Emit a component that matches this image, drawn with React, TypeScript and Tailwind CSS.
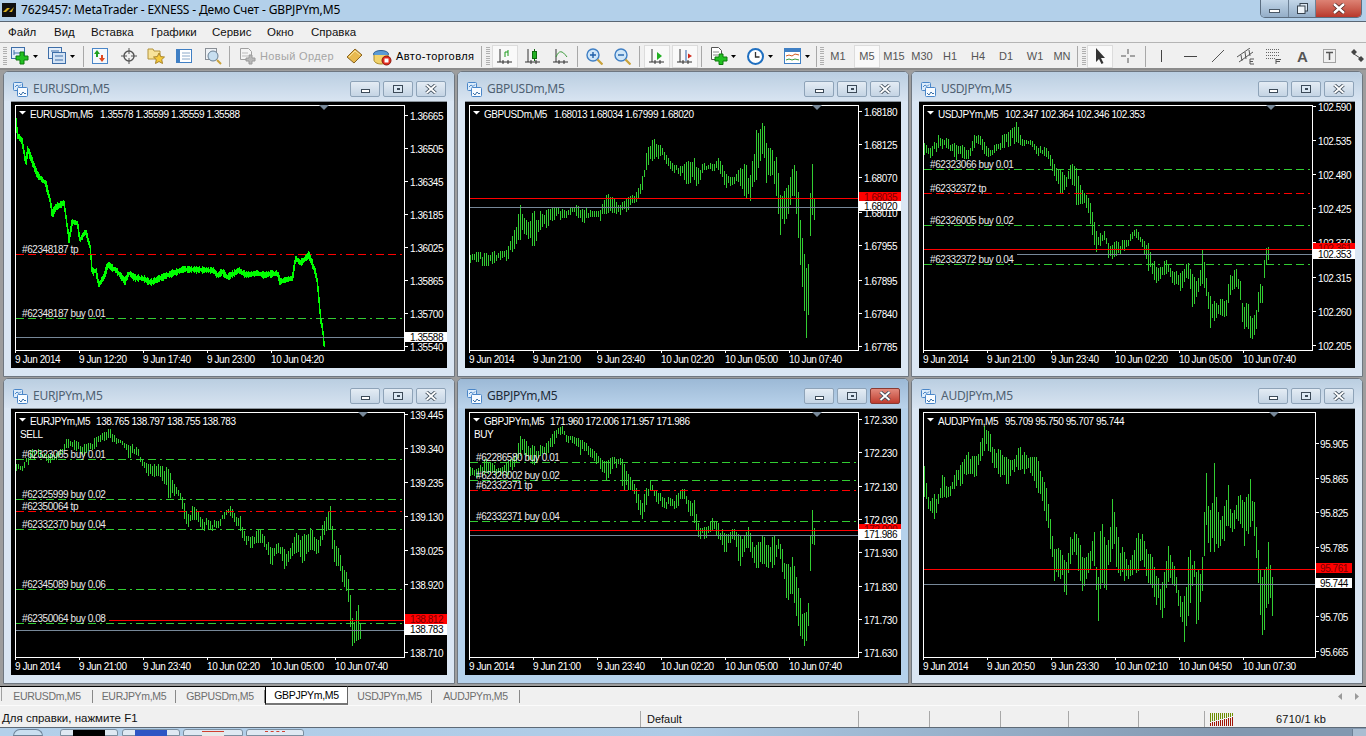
import React from "react";

type Key = [number, number, number];
type Order = { label: string; textY: number; lineY: number; color: string };
type ChartCfg = {
  symbol: string;
  values: string;
  valuesX: number;
  ox: number;
  oy: number;
  frameRight?: number;
  prices: [string, number][];
  ask: [string, number, number, number];
  bid: [string, number, number, number];
  askX?: number;
  bidX?: number;
  boxX?: number;
  boxW?: number;
  priceX?: number;
  orders: Order[];
  times: string[];
  shift: number;
  note?: [string, number, number];
  keys?: Key[];
  line?: [number, number][];
  active?: boolean;
};

const GREEN = "#32cd32";
const RED = "#ff0000";

const buy = (label: string, textY: number, lineY: number): Order => ({ label, textY, lineY, color: GREEN });
const tp = (label: string, textY: number, lineY: number): Order => ({ label, textY, lineY, color: RED });

const rnd = (i: number) => {
  const x = Math.sin(i * 12.9898) * 43758.5453;
  return x - Math.floor(x);
};

function barsPath(keys: Key[], ox: number, oy: number) {
  let d = "";
  const start = keys[0][0];
  const end = keys[keys.length - 1][0];
  let k = 0;
  for (let i = 0; start + i * 6 <= end; i++) {
    const zx = start + i * 6;
    while (k < keys.length - 2 && keys[k + 1][0] < zx) k++;
    const a = keys[k];
    const b = keys[k + 1];
    const t = (zx - a[0]) / (b[0] - a[0]);
    let top = a[1] + (b[1] - a[1]) * t;
    let bottom = a[2] + (b[2] - a[2]) * t;
    // bars away from a key point are shorter and wander a bit, like real candles
    if (Math.min(zx - a[0], b[0] - zx) >= 6) {
      const range = bottom - top;
      const off = (rnd(i + 7) - 0.5) * 14;
      top += rnd(i + 3) * range * 0.3 + off;
      bottom -= rnd(i + 91) * range * 0.3 - off;
    }
    const x = Math.round((start - ox) / 3) + i * 2 + 0.5;
    d += `M${x} ${Math.round((top - oy) / 3)}V${Math.round((Math.max(bottom, top + 9) - oy) / 3)}`;
  }
  return d;
}

function linePath(pts: [number, number][], ox: number, oy: number) {
  const at = (zx: number) => {
    let k = 0;
    while (k < pts.length - 2 && pts[k + 1][0] < zx) k++;
    const a = pts[k];
    const b = pts[k + 1];
    return a[1] + ((b[1] - a[1]) * (zx - a[0])) / (b[0] - a[0]);
  };
  let d = "";
  const start = pts[0][0];
  const end = pts[pts.length - 1][0];
  for (let i = 0; start + i * 3 <= end; i++) {
    const zx = start + i * 3;
    const y0 = at(zx);
    const y1 = at(Math.min(zx + 3, end));
    const j = 3 + rnd(i) * 7;
    const x = Math.round((start - ox) / 3) + i + 0.5;
    d += `M${x} ${Math.round((Math.min(y0, y1) - j - oy) / 3)}V${Math.round((Math.max(y0, y1) + j - oy) / 3) + 1}`;
  }
  return d;
}

const charts: ChartCfg[] = [
  {
    symbol: "EURUSDm,M5",
    values: "1.35578 1.35599 1.35559 1.35588",
    valuesX: 298,
    ox: 32,
    oy: 8,
    prices: [["1.36665", 47], ["1.36505", 146], ["1.36345", 245], ["1.36185", 344], ["1.36025", 443], ["1.35865", 541], ["1.35700", 640], ["1.35540", 739]],
    ask: ["", 0, 0, 0],
    bid: ["1.35588", 712, 697, 728],
    orders: [tp("#62348187 tp", 445, 463), buy("#62348187 buy 0.01", 638, 655)],
    times: ["9 Jun 2014", "9 Jun 12:20", "9 Jun 17:40", "9 Jun 23:00", "10 Jun 04:20"],
    shift: 313,
    line: [[46, 60], [50, 105], [65, 125], [75, 190], [82, 150], [95, 185], [110, 225], [135, 250], [148, 300], [155, 345], [165, 322], [190, 310], [195, 345], [205, 420], [215, 365], [230, 370], [238, 420], [255, 395], [268, 440], [275, 520], [285, 510], [295, 555], [310, 530], [322, 495], [350, 515], [373, 545], [385, 520], [405, 535], [425, 535], [450, 548], [490, 530], [550, 508], [640, 512], [650, 528], [665, 515], [680, 532], [715, 512], [735, 525], [770, 520], [790, 525], [830, 520], [838, 545], [875, 535], [885, 475], [900, 490], [925, 465], [935, 490], [948, 530], [955, 600], [960, 660], [965, 680], [970, 732]],
  },
  {
    symbol: "GBPUSDm,M5",
    values: "1.68013 1.68034 1.67999 1.68020",
    valuesX: 292,
    ox: 26,
    oy: 97,
    prices: [["1.68180", 125], ["1.68125", 224], ["1.68070", 323], ["1.68010", 428], ["1.67955", 527], ["1.67895", 632], ["1.67840", 731], ["1.67785", 830]],
    ask: ["1.68035", 385, 366, 395],
    bid: ["1.68020", 412, 395, 423],
    orders: [],
    times: ["9 Jun 2014", "9 Jun 21:00", "9 Jun 23:40", "10 Jun 02:20", "10 Jun 05:00", "10 Jun 07:40"],
    shift: 352,
    keys: [[40, 555, 580], [60, 545, 575], [85, 550, 590], [110, 545, 580], [130, 545, 570], [150, 540, 575], [170, 490, 540], [190, 405, 510], [205, 455, 490], [230, 425, 535], [250, 425, 480], [270, 420, 475], [290, 412, 450], [320, 420, 445], [340, 415, 435], [360, 405, 440], [380, 420, 460], [410, 425, 440], [430, 420, 455], [450, 370, 430], [470, 385, 430], [490, 405, 435], [510, 385, 425], [540, 365, 395], [556, 320, 360], [570, 240, 290], [590, 205, 270], [610, 225, 260], [630, 260, 285], [650, 285, 310], [670, 290, 318], [690, 275, 345], [712, 265, 330], [720, 300, 355], [740, 280, 300], [770, 285, 305], [785, 262, 300], [805, 310, 355], [830, 325, 345], [845, 300, 335], [865, 280, 385], [880, 315, 395], [898, 180, 330], [905, 190, 290], [920, 150, 240], [928, 220, 340], [945, 240, 310], [960, 265, 390], [970, 375, 495], [985, 360, 455], [995, 345, 430], [1010, 280, 360], [1020, 310, 450], [1030, 450, 585], [1040, 540, 695], [1048, 595, 805], [1055, 580, 725], [1062, 285, 410], [1068, 280, 450], [1072, 385, 450]],
  },
  {
    symbol: "USDJPYm,M5",
    values: "102.347 102.364 102.346 102.353",
    valuesX: 283,
    ox: 26,
    oy: 97,
    prices: [["102.590", 110], ["102.535", 212], ["102.480", 314], ["102.425", 416], ["102.370", 518], ["102.315", 623], ["102.260", 725], ["102.205", 827]],
    ask: ["102.361", 538, 519, 537],
    bid: ["102.353", 553, 537, 567],
    bidX: 320,
    orders: [buy("#62323066 buy 0.01", 281, 298), tp("#62332372 tp", 353, 370), buy("#62326005 buy 0.02", 449, 466), buy("#62332372 buy 0.04", 566, 583)],
    times: ["9 Jun 2014", "9 Jun 21:00", "9 Jun 23:40", "10 Jun 02:20", "10 Jun 05:00", "10 Jun 07:40"],
    shift: 352,
    keys: [[40, 220, 255], [60, 235, 265], [82, 195, 235], [110, 205, 235], [135, 225, 270], [155, 225, 265], [170, 245, 270], [190, 195, 235], [205, 195, 220], [218, 215, 250], [230, 235, 265], [255, 225, 245], [275, 195, 235], [295, 185, 230], [317, 157, 215], [335, 210, 230], [365, 215, 232], [380, 235, 260], [405, 232, 260], [420, 260, 295], [435, 295, 330], [450, 300, 375], [465, 325, 355], [480, 280, 325], [497, 295, 410], [510, 355, 400], [530, 380, 420], [540, 405, 475], [555, 485, 550], [580, 485, 510], [592, 520, 565], [615, 515, 560], [640, 510, 545], [660, 490, 510], [678, 478, 505], [695, 510, 535], [712, 520, 605], [735, 590, 640], [745, 595, 630], [765, 568, 610], [785, 605, 640], [810, 610, 665], [830, 575, 615], [845, 615, 720], [860, 640, 670], [875, 532, 640], [885, 620, 670], [898, 680, 775], [915, 700, 745], [930, 685, 735], [945, 700, 745], [955, 620, 680], [975, 595, 650], [988, 635, 690], [996, 720, 780], [1010, 690, 770], [1020, 750, 815], [1035, 730, 785], [1045, 640, 700], [1055, 650, 700], [1062, 538, 595], [1072, 532, 570]],
  },
  {
    symbol: "EURJPYm,M5",
    values: "138.765 138.797 138.755 138.783",
    valuesX: 286,
    ox: 32,
    oy: 100,
    prices: [["139.445", 116], ["139.340", 218], ["139.235", 320], ["139.130", 422], ["139.025", 524], ["138.920", 626], ["138.710", 830]],
    ask: ["138.812", 733, 714, 745],
    bid: ["138.783", 763, 746, 777],
    askX: 327,
    orders: [buy("#62323065 buy 0.01", 233, 250), buy("#62325999 buy 0.02", 353, 370), tp("#62350064 tp", 389, 406), buy("#62332370 buy 0.04", 443, 460), buy("#62345089 buy 0.06", 623, 640), buy("#62350064 buy 0.08", 725, 742)],
    times: ["9 Jun 2014", "9 Jun 21:00", "9 Jun 23:40", "10 Jun 02:20", "10 Jun 05:00", "10 Jun 07:40"],
    shift: 352,
    note: ["SELL", 58, 173],
    keys: [[46, 265, 285], [65, 270, 285], [90, 220, 250], [115, 220, 240], [145, 235, 265], [170, 230, 250], [197, 190, 215], [225, 195, 225], [250, 205, 240], [285, 185, 215], [310, 170, 195], [325, 157, 185], [345, 185, 205], [375, 205, 220], [383, 210, 250], [410, 213, 235], [420, 250, 265], [440, 265, 300], [460, 265, 305], [480, 270, 305], [503, 280, 370], [520, 325, 360], [540, 355, 375], [547, 370, 420], [560, 420, 458], [575, 390, 430], [590, 405, 435], [600, 430, 460], [625, 435, 465], [655, 435, 455], [670, 410, 430], [690, 390, 420], [705, 425, 450], [718, 420, 465], [725, 460, 490], [750, 485, 520], [775, 460, 500], [790, 480, 515], [812, 520, 575], [830, 500, 525], [850, 520, 580], [870, 515, 545], [885, 470, 530], [905, 480, 565], [930, 455, 520], [950, 500, 540], [965, 445, 490], [978, 420, 460], [988, 390, 460], [995, 460, 530], [1002, 505, 570], [1015, 520, 570], [1025, 575, 625], [1040, 595, 655], [1048, 658, 755], [1055, 740, 820], [1062, 740, 795], [1070, 670, 795], [1078, 745, 790]],
  },
  {
    symbol: "GBPJPYm,M5",
    values: "171.960 172.006 171.957 171.986",
    valuesX: 280,
    ox: 26,
    oy: 88,
    active: true,
    prices: [["172.330", 118], ["172.230", 217], ["172.130", 319], ["172.030", 418], ["171.930", 517], ["171.830", 619], ["171.730", 718], ["171.630", 817]],
    ask: ["172.000", 452, 432, 448],
    bid: ["171.986", 466, 448, 480],
    orders: [buy("#62286580 buy 0.01", 230, 247), buy("#62326002 buy 0.02", 284, 301), tp("#62332371 tp", 314, 331), buy("#62332371 buy 0.04", 407, 424)],
    times: ["9 Jun 2014", "9 Jun 21:00", "9 Jun 23:40", "10 Jun 02:20", "10 Jun 05:00", "10 Jun 07:40"],
    shift: 352,
    note: ["BUY", 52, 160],
    keys: [[40, 262, 290], [60, 270, 295], [85, 235, 280], [105, 250, 280], [130, 265, 290], [150, 245, 290], [170, 235, 265], [190, 168, 230], [205, 182, 225], [230, 200, 260], [250, 195, 230], [270, 190, 225], [290, 155, 195], [315, 138, 160], [330, 170, 190], [350, 170, 190], [370, 180, 225], [395, 200, 225], [415, 215, 248], [435, 240, 275], [450, 245, 305], [465, 232, 270], [490, 235, 255], [497, 240, 330], [515, 285, 330], [530, 310, 335], [540, 330, 380], [555, 375, 420], [565, 330, 385], [580, 305, 335], [600, 335, 370], [620, 355, 385], [640, 355, 380], [660, 345, 385], [680, 322, 350], [695, 365, 400], [712, 360, 430], [722, 430, 470], [745, 445, 480], [765, 415, 450], [780, 425, 470], [805, 465, 525], [830, 445, 470], [848, 470, 565], [865, 465, 505], [875, 438, 505], [890, 505, 545], [900, 495, 570], [920, 462, 550], [930, 505, 565], [950, 465, 565], [965, 480, 505], [975, 505, 570], [990, 560, 668], [1007, 530, 640], [1020, 605, 720], [1030, 655, 770], [1045, 710, 808], [1055, 665, 730], [1062, 392, 510], [1067, 390, 490], [1072, 445, 495]],
  },
  {
    symbol: "AUDJPYm,M5",
    values: "95.709 95.750 95.707 95.744",
    valuesX: 285,
    ox: 26,
    oy: 100,
    frameRight: 396,
    boxX: 397,
    boxW: 36,
    priceX: 401,
    prices: [["95.905", 203], ["95.865", 308], ["95.825", 410], ["95.785", 515], ["95.705", 722], ["95.665", 827]],
    ask: ["95.761", 580, 562, 593],
    bid: ["95.744", 625, 607, 638],
    orders: [],
    times: ["9 Jun 2014", "9 Jun 20:50", "9 Jun 23:30", "10 Jun 02:10", "10 Jun 04:50", "10 Jun 07:30"],
    shift: 355,
    keys: [[40, 270, 365], [52, 365, 400], [70, 355, 430], [82, 355, 385], [95, 292, 365], [115, 340, 365], [135, 285, 330], [150, 265, 330], [172, 230, 295], [195, 245, 305], [208, 200, 255], [220, 152, 225], [237, 170, 225], [245, 220, 268], [265, 220, 300], [290, 250, 330], [310, 250, 290], [325, 210, 280], [340, 230, 295], [365, 245, 300], [380, 245, 350], [390, 295, 358], [405, 330, 430], [418, 430, 520], [430, 520, 615], [445, 515, 600], [465, 565, 665], [478, 485, 565], [490, 470, 530], [505, 490, 600], [515, 550, 650], [530, 540, 595], [550, 470, 570], [562, 605, 735], [570, 418, 610], [585, 515, 650], [604, 370, 520], [620, 480, 590], [640, 530, 615], [660, 555, 600], [680, 470, 590], [695, 475, 550], [710, 535, 620], [722, 535, 630], [735, 600, 685], [755, 620, 728], [772, 510, 620], [790, 570, 630], [805, 660, 705], [820, 660, 800], [835, 515, 700], [850, 555, 605], [857, 595, 770], [875, 540, 640], [885, 277, 440], [895, 440, 530], [910, 262, 530], [925, 445, 515], [940, 390, 495], [952, 328, 450], [965, 420, 470], [985, 352, 430], [1000, 380, 510], [1018, 310, 455], [1030, 380, 480], [1040, 505, 590], [1050, 600, 750], [1056, 605, 790], [1072, 500, 685], [1084, 605, 720]],
  },
];

const chartText = "font-['Liberation_Sans',Arial,sans-serif] text-[10px] tracking-[-0.43px]";

function ChartSvg({ c }: { c: ChartCfg }) {
  const ly = (z: number) => Math.round((z - c.oy) / 3);
  const lx = (z: number) => Math.round((z - c.ox) / 3);
  const right = c.frameRight ?? 393;
  const boxX = c.boxX ?? 394;
  const boxW = c.boxW ?? 42;
  const priceX = c.priceX ?? 399;
  return (
    <svg width="436" height="266" viewBox="0 0 436 266" className="block bg-black">
      {c.keys && <path d={barsPath(c.keys, c.ox, c.oy)} stroke={GREEN} strokeWidth="1" shapeRendering="crispEdges" fill="none" />}
      {c.line && <path d={linePath(c.line, c.ox, c.oy)} stroke="#00ff00" strokeWidth="1" shapeRendering="crispEdges" fill="none" />}
      {c.orders.map((o) => (
        <line key={o.label + o.lineY} x1="5" x2={right} y1={ly(o.lineY) + 0.5} y2={ly(o.lineY) + 0.5} stroke={o.color} strokeDasharray="8 4 8 4 2 4" shapeRendering="crispEdges" />
      ))}
      {c.ask[0] && <line x1={c.askX ? lx(c.askX) : 5} x2={right} y1={ly(c.ask[1]) + 0.5} y2={ly(c.ask[1]) + 0.5} stroke={RED} shapeRendering="crispEdges" />}
      <line x1={c.bidX ? lx(c.bidX) : 5} x2={right} y1={ly(c.bid[1]) + 0.5} y2={ly(c.bid[1]) + 0.5} stroke="#778899" shapeRendering="crispEdges" />
      <rect x="4.5" y="3.5" width={right - 4} height="244.5" fill="none" stroke="#fff" shapeRendering="crispEdges" />
      <path d={`M${c.shift - 5} 3h10l-5 5z`} fill="#778899" />
      <path d="M8 9h7l-3.5 3.5z" fill="#fff" />
      <text x="19" y="16" fill="#fff" className={chartText}>{c.symbol}</text>
      <text x={lx(c.valuesX)} y="16" fill="#fff" className={chartText}>{c.values}</text>
      {c.note && <text x={lx(c.note[1])} y={ly(c.note[2]) + 5} fill="#fff" className={chartText}>{c.note[0]}</text>}
      {c.orders.map((o) => (
        <text key={o.label + o.textY} x={lx(c.ox + 33)} y={ly(o.textY) + 5} fill="#e8e8e8" className={chartText}>{o.label}</text>
      ))}
      {c.prices.map(([p, y]) => (
        <g key={p}>
          <line x1={right + 1} x2={right + 4} y1={ly(y) + 0.5} y2={ly(y) + 0.5} stroke="#fff" shapeRendering="crispEdges" />
          <text x={priceX} y={ly(y) + 5} fill="#fff" className={chartText}>{p}</text>
        </g>
      ))}
      {c.ask[0] && <rect x={boxX} y={ly(c.ask[2])} width={boxW} height={ly(c.ask[3]) - ly(c.ask[2])} fill={RED} />}
      {c.ask[0] && <text x={priceX} y={ly(c.ask[2]) + 9} fill="#7a0000" className={chartText}>{c.ask[0]}</text>}
      <rect x={boxX} y={ly(c.bid[2])} width={boxW} height={ly(c.bid[3]) - ly(c.bid[2])} fill="#fff" />
      <text x={priceX} y={ly(c.bid[2]) + 9} fill="#000" className={chartText}>{c.bid[0]}</text>
      {c.times.map((t, i) => (
        <g key={t}>
          <line x1={4.5 + i * 64} x2={4.5 + i * 64} y1="248" y2="251" stroke="#fff" shapeRendering="crispEdges" />
          <text x={4 + i * 64} y="261" fill="#fff" className={chartText}>{t}</text>
        </g>
      ))}
    </svg>
  );
}

function ChartGlyph() {
  return (
    <svg width="15" height="15" viewBox="0 0 15 15" fill="none">
      <rect x="0.5" y="0.5" width="9" height="8" rx="1" fill="#dcecfb" stroke="#4a86c8" />
      <rect x="4.5" y="5.5" width="10" height="9" rx="1" fill="#f7fbff" stroke="#4a86c8" />
      <path d="M2 5l2-2 2 1.5 2-2" stroke="#4a86c8" />
      <path d="M6 11l2 2 2-3 2 2 1-1" stroke="#3a70a8" />
    </svg>
  );
}

function ChartWindow({ c }: { c: ChartCfg }) {
  const active = c.active;
  return (
    <div className={`w-[452px] h-[306px] border border-[#6f7780] rounded-t-[5px] flex flex-col ${active ? "bg-[#b5d1eb]" : "bg-[#dae6f3]"}`}>
      <div className={`h-[29px] flex items-end pb-[4px] pl-[9px] pr-[8px] rounded-t-[4px] bg-gradient-to-b ${active ? "from-[#9cb9d6] to-[#bad3eb]" : "from-[#bacee1] to-[#d8e4f1]"}`}>
        <ChartGlyph />
        <span className={`ml-[5px] text-[12px] leading-[16px] font-['Noto_Sans',sans-serif] tracking-[-0.25px] ${active ? "text-[#1d2a38]" : "text-[#4f6172]"}`}>{c.symbol}</span>
        <div className="ml-auto flex gap-[3px]">
          <WinBtn><div className="w-[9px] h-[4px] border border-[#3c4a58] bg-white mt-[3px]" /></WinBtn>
          <WinBtn><div className="w-[10px] h-[8px] border-[1.5px] border-[#3c4a58] bg-[#dce8f3] flex items-center justify-center"><div className="w-[3px] h-[2px] bg-[#3c4a58]" /></div></WinBtn>
          <WinBtn red={active}>
            <svg width="12" height="10" viewBox="0 0 12 10"><path d="M1.5 1l9 8M10.5 1l-9 8" stroke="#3c4a58" strokeWidth="3.6" /><path d="M1.5 1l9 8M10.5 1l-9 8" stroke="#fff" strokeWidth="1.8" /></svg>
          </WinBtn>
        </div>
      </div>
      <div className="mx-[7px] border-t border-[#8b949c]">
        <ChartSvg c={c} />
      </div>
    </div>
  );
}

function WinBtn({ children, red }: { children: React.ReactNode; red?: boolean }) {
  return (
    <div className={`w-[30px] h-[16px] rounded-[2px] border flex items-center justify-center bg-gradient-to-b ${red ? "border-[#8a3a32] from-[#e2897c] to-[#bf3b2e]" : "border-[#8ea3b8] from-[#e4ecf4] to-[#c4d4e4]"}`}>
      {children}
    </div>
  );
}

const Caret = ({ ml }: { ml: string }) => (
  <svg width="5" height="3" viewBox="0 0 5 3" className={ml}><path d="M0 0h5L2.5 3z" fill="#000" /></svg>
);
const Sep = ({ ml }: { ml: string }) => <div className={`w-px h-[21px] bg-[#a8a8a8] ${ml}`} />;
const Grip = ({ ml }: { ml: string }) => (
  <div className={`w-[4px] h-[20px] ${ml} flex flex-col justify-between py-[1px]`}>
    {Array.from({ length: 9 }).map((_, i) => <div key={i} className="h-px bg-[#b0b0b0]" />)}
  </div>
);
const Pressed = ({ ml, children }: { ml: string; children: React.ReactNode }) => (
  <div className={`w-[26px] h-[23px] flex items-center justify-center border border-[#dcdcdc] bg-[#f9f9f9] text-[#555] ${ml}`}>{children}</div>
);
const Tf = ({ ml, label }: { ml: string; label: string }) => (
  <div className={`w-[26px] h-[23px] flex items-center justify-center text-[#555] ${ml}`}>{label}</div>
);

const Axes = ({ children }: { children?: React.ReactNode }) => (
  <svg width="16" height="17" viewBox="0 0 16 17" fill="none">
    <path d="M3 1v13M0 14h15M6 12v4M11 12v4" stroke="#333" />
    {children}
  </svg>
);

function Toolbar() {
  return (
    <div className="h-[27px] pt-px flex items-center bg-[#f0f0f0] border-b-2 border-[#8b8b8b] text-[11px] font-['Liberation_Sans',sans-serif]">
      <Grip ml="ml-[3px]" />
      <svg width="18" height="18" viewBox="0 0 18 18" className="ml-[4px]" fill="none">
        <rect x="0.5" y="0.5" width="13" height="11" fill="#e4eefa" stroke="#3e6ea8" />
        <path d="M3 6h7M3 3v5" stroke="#3e6ea8" />
        <path d="M9 5h4v4h4v4h-4v4H9v-4H5V9h4z" fill="#22c022" stroke="#0d7a0d" />
      </svg>
      <Caret ml="ml-[4px]" />
      <svg width="18" height="18" viewBox="0 0 18 18" className="ml-[10px]" fill="none">
        <rect x="0.5" y="0.5" width="13" height="11" fill="#e4eefa" stroke="#3e6ea8" />
        <rect x="4.5" y="5.5" width="13" height="11" fill="#d3e3f5" stroke="#3e6ea8" />
        <path d="M3 4h8M7 9h8M7 13h8" stroke="#3e6ea8" />
      </svg>
      <Caret ml="ml-[4px]" />
      <Sep ml="ml-[8px]" />
      <svg width="16" height="16" viewBox="0 0 16 16" className="ml-[8px]" fill="none">
        <rect x="0.5" y="0.5" width="15" height="15" fill="#f4f8fc" stroke="#4a86c8" />
        <path d="M5 2l3 4H6v3H4V6H2z" fill="#1fa01f" />
        <path d="M10 14l-3-4h2V7h2v3h2z" fill="#e0481f" />
      </svg>
      <svg width="16" height="16" viewBox="0 0 16 16" className="ml-[13px]" fill="none">
        <circle cx="8" cy="8" r="5" stroke="#555" strokeWidth="1.4" />
        <path d="M8 0v6M8 10v6M0 8h6M10 8h6" stroke="#555" />
      </svg>
      <svg width="18" height="18" viewBox="0 0 18 18" className="ml-[10px]" fill="none">
        <path d="M1 2h5l1 2h6v8H1z" fill="#f7e39a" stroke="#b2923a" />
        <path d="M12 6l1.7 3.6 3.8.4-2.8 2.6.8 3.9-3.5-2-3.5 2 .8-3.9L6.5 10l3.8-.4z" fill="#f5c93a" stroke="#a8842a" />
      </svg>
      <svg width="16" height="16" viewBox="0 0 16 16" className="ml-[11px]" fill="none">
        <rect x="0.5" y="1.5" width="15" height="13" fill="#fff" stroke="#3f7fc4" />
        <rect x="1" y="2" width="3" height="12" fill="#3f7fc4" />
        <path d="M6 5h8M6 8h8M6 11h8" stroke="#8aa8c8" />
      </svg>
      <svg width="18" height="18" viewBox="0 0 18 18" className="ml-[12px]" fill="none">
        <rect x="1.5" y="1.5" width="11" height="11" fill="#eef2f6" stroke="#8a8f96" />
        <circle cx="9" cy="9" r="5" fill="#c8dff0" stroke="#6a7f92" />
        <path d="M13 13l4 4" stroke="#c9a23a" strokeWidth="2" />
      </svg>
      <Sep ml="ml-[7px]" />
      <svg width="18" height="18" viewBox="0 0 18 18" className="ml-[9px]" fill="none">
        <path d="M1.5 1.5h8l3 3v8h-11z" fill="#f4f4f4" stroke="#a0a0a0" />
        <path d="M3 6h6M3 9h6" stroke="#bbb" />
        <path d="M10 8h3v3h3v3h-3v3h-3v-3H7v-3h3z" fill="#b8b8b8" stroke="#9a9a9a" />
      </svg>
      <span className="ml-[3px] w-[74px] text-[#a5a5a5] whitespace-nowrap tracking-[0.35px]">Новый Ордер</span>
      <svg width="17" height="16" viewBox="0 0 17 16" className="ml-[12px]" fill="none">
        <path d="M1 9l8-8 7 6-8 8z" fill="#e8b94e" stroke="#8a6420" />
        <path d="M3 9l6-6 5 4" stroke="#f8e3a0" />
      </svg>
      <svg width="19" height="19" viewBox="0 0 19 19" className="ml-[10px]" fill="none">
        <ellipse cx="8" cy="7" rx="7.5" ry="3.5" fill="#5b9bd5" stroke="#2f5f92" />
        <path d="M1 8v5c0 2 3 4 7 4s7-2 7-4V8" fill="#f2d36b" stroke="#a88a2a" />
        <circle cx="13.5" cy="13.5" r="4.5" fill="#e02a1c" stroke="#8a1a10" />
        <rect x="11.5" y="11.5" width="4" height="4" fill="#fff" />
      </svg>
      <span className="ml-[4px] w-[78px] text-black whitespace-nowrap tracking-[0.45px]">Авто-торговля</span>
      <Sep ml="ml-[7px]" />
      <Grip ml="ml-[4px]" />
      <Pressed ml="ml-[2px]"><Axes><path d="M8 9V4M11 8V2" stroke="#1a9a1a" /><path d="M8 4h3" stroke="#1a9a1a" /></Axes></Pressed>
      <div className="ml-[7px]"><Axes><rect x="7.5" y="3.5" width="4" height="7" fill="#22b022" stroke="#0d6a0d" /><path d="M9.5 1v2M9.5 11v2" stroke="#0d6a0d" /></Axes></div>
      <div className="ml-[12px]"><Axes><path d="M3 9c3-7 6-7 11 0" stroke="#3a9a3a" /></Axes></div>
      <Sep ml="ml-[8px]" />
      <svg width="17" height="17" viewBox="0 0 17 17" className="ml-[8px]" fill="none">
        <circle cx="7" cy="7" r="6" fill="#cfe6f8" stroke="#3f7fc4" strokeWidth="1.4" />
        <path d="M4 7h6M7 4v6" stroke="#1f5fa8" strokeWidth="1.4" />
        <path d="M11.5 11.5l5 5" stroke="#c9a23a" strokeWidth="2.2" />
      </svg>
      <svg width="17" height="17" viewBox="0 0 17 17" className="ml-[11px]" fill="none">
        <circle cx="7" cy="7" r="6" fill="#cfe6f8" stroke="#3f7fc4" strokeWidth="1.4" />
        <path d="M4 7h6" stroke="#1f5fa8" strokeWidth="1.4" />
        <path d="M11.5 11.5l5 5" stroke="#c9a23a" strokeWidth="2.2" />
      </svg>
      <Sep ml="ml-[8px]" />
      <Pressed ml="ml-[4px]"><Axes><path d="M8 4l5 4-5 4z" fill="#22b022" /></Axes></Pressed>
      <Pressed ml="ml-[2px]"><Axes><path d="M9 2v11" stroke="#2a5fa8" /><path d="M15 8l-4-2.5v5z" fill="#d02a1c" /></Axes></Pressed>
      <Sep ml="ml-[3px]" />
      <svg width="17" height="18" viewBox="0 0 17 18" className="ml-[9px]" fill="none">
        <path d="M0.5 0.5h7l3 3v9h-10z" fill="#fff" stroke="#555" />
        <path d="M2 5h6M2 8h5" stroke="#888" />
        <path d="M8 7h4v3h4v4h-4v3.5H8V14H4v-4h4z" fill="#22c022" stroke="#0d7a0d" />
      </svg>
      <Caret ml="ml-[3px]" />
      <svg width="17" height="17" viewBox="0 0 17 17" className="ml-[11px]" fill="none">
        <circle cx="8.5" cy="8.5" r="7.5" fill="#fff" stroke="#1f6fc0" strokeWidth="2" />
        <path d="M8.5 4v5h4" stroke="#333" strokeWidth="1.3" />
      </svg>
      <Caret ml="ml-[4px]" />
      <svg width="17" height="16" viewBox="0 0 17 16" className="ml-[11px]" fill="none">
        <rect x="0.5" y="0.5" width="16" height="15" fill="#fff" stroke="#3f7fc4" />
        <rect x="1" y="1" width="15" height="3" fill="#3f7fc4" />
        <path d="M2 8l3-1 3 1 3-2 4 1" stroke="#d05a20" />
        <path d="M2 12l3-1 3 1 3-1 4 1" stroke="#3a9a3a" />
      </svg>
      <Caret ml="ml-[4px]" />
      <Sep ml="ml-[6px]" />
      <Grip ml="ml-[3px]" />
      <Tf ml="ml-[1px]" label="M1" />
      <Pressed ml="ml-[3px]">M5</Pressed>
      <Tf ml="ml-[1px]" label="M15" />
      <Tf ml="ml-[2px]" label="M30" />
      <Tf ml="ml-[2px]" label="H1" />
      <Tf ml="ml-[2px]" label="H4" />
      <Tf ml="ml-[2px]" label="D1" />
      <Tf ml="ml-[3px]" label="W1" />
      <Tf ml="ml-[1px]" label="MN" />
      <Sep ml="ml-[2px]" />
      <Grip ml="ml-[4px]" />
      <Pressed ml="ml-[1px]">
        <svg width="11" height="17" viewBox="0 0 11 17"><path d="M1 0v14l3-3 2.500 5 2-1-2.500-5h4z" fill="#333" /></svg>
      </Pressed>
      <svg width="16" height="16" viewBox="0 0 16 16" className="ml-[7px]" fill="none"><path d="M8 1v5M8 10v5M1 8h5M10 8h5" stroke="#555" /></svg>
      <Sep ml="ml-[9px]" />
      <div className="ml-[15px] mr-[6px] w-px h-[12px] bg-[#444]" />
      <div className="ml-[16px] w-[13px] h-px bg-[#444]" />
      <svg width="14" height="14" viewBox="0 0 14 14" className="ml-[14px]"><path d="M1 13L13 1" stroke="#555" /></svg>
      <svg width="18" height="17" viewBox="0 0 18 17" className="ml-[12px]" fill="none">
        <path d="M0 9L13 0M2 14L16 4M4 7l1 6M8 4l1 7M12 2l1 6" stroke="#555" />
        <path d="M13 11h4M13 13.500h3M13 16h4M13 11v5" stroke="#555" />
      </svg>
      <svg width="16" height="16" viewBox="0 0 16 16" className="ml-[11px]" fill="none">
        <path d="M0 1.500h13M0 4.500h13M0 7.500h13M0 10.500h9" stroke="#666" strokeDasharray="1 1" />
        <path d="M10 11.500h5M10 11v5M10 13.500h4" stroke="#555" />
      </svg>
      <span className="ml-[15px] w-[10px] text-[15px] font-bold text-[#555] leading-none">A</span>
      <svg width="13" height="14" viewBox="0 0 13 14" className="ml-[16px]" fill="none">
        <rect x="0.5" y="0.5" width="12" height="13" stroke="#555" strokeDasharray="1 1" />
        <path d="M3 3.500h7M6.500 3v8" stroke="#555" strokeWidth="1.500" />
      </svg>
      <svg width="13" height="14" viewBox="0 0 13 14" className="ml-[15px]" fill="none">
        <path d="M3 0l3 3-3 3-3-3zM10 7l3 3-3 3-3-3z" fill="#444" />
        <path d="M3 5l6 4" stroke="#444" />
      </svg>
    </div>
  );
}

const tabs = [
  { name: "EURUSDm,M5", w: "w-[91px]" },
  { name: "EURJPYm,M5", w: "w-[83px]" },
  { name: "GBPUSDm,M5", w: "w-[89px]" },
  { name: "GBPJPYm,M5", w: "w-[83px]", active: true },
  { name: "USDJPYm,M5", w: "w-[84px]" },
  { name: "AUDJPYm,M5", w: "w-[88px]" },
];

export default function App() {
  return (
    <div className="w-[1366px] h-[736px] overflow-hidden flex flex-col bg-[#f0f0f0] font-['Liberation_Sans',sans-serif]">
      {/* title bar */}
      <div className="h-[22px] flex items-start bg-[#b3d0ea] border-b border-[#5a6673]">
        <svg width="14" height="14" viewBox="0 0 14 14" className="ml-[2px] mt-[3px]">
          <rect width="14" height="14" fill="#111" />
          <path d="M1 9l4-4h3L4 9zM7 9l5-5-2 5z" fill="#d8b020" />
        </svg>
        <span className="ml-[5px] mt-[1px] text-[12px] leading-[18px] tracking-[-0.15px] text-black font-['Noto_Sans',sans-serif] whitespace-nowrap">7629457: MetaTrader - EXNESS - Демо Счет - GBPJPYm,M5</span>
        <div className="ml-auto mr-[4px] h-[18px] w-[102px] flex rounded-b-[5px] border border-t-0 border-[#5b6d80] overflow-hidden">
          <div className="w-[28px] bg-gradient-to-b from-[#c3d6e8] to-[#94aec8] flex items-center justify-center border-r border-[#6d8196]"><div className="w-[11px] h-[4px] mt-[5px] bg-white border border-[#4a5866]" /></div>
          <div className="w-[27px] bg-gradient-to-b from-[#c3d6e8] to-[#94aec8] flex items-center justify-center border-r border-[#6d8196]">
            <svg width="11" height="11" viewBox="0 0 11 11" fill="none"><rect x="3" y="0.5" width="7.500" height="7.500" stroke="#37434f" fill="#dbe6f0" /><rect x="0.5" y="3" width="7.500" height="7.500" stroke="#37434f" fill="#eef4f9" /></svg>
          </div>
          <div className="flex-1 bg-gradient-to-b from-[#dd8274] to-[#b8372b] flex items-center justify-center">
            <svg width="14" height="11" viewBox="0 0 14 11"><path d="M2 1l10 9M12 1L2 10" stroke="#4f2420" strokeWidth="4" /><path d="M2 1l10 9M12 1L2 10" stroke="#fff" strokeWidth="2.400" /></svg>
          </div>
        </div>
      </div>

      {/* menu */}
      <div className="h-[21px] pt-px flex items-center bg-[#f0f0f0] border-b border-[#b4b4b4] text-[11.5px] text-[#111] font-['Liberation_Sans',sans-serif]">
        <span className="ml-[8px] w-[27px]">Файл</span>
        <span className="ml-[19px] w-[19px]">Вид</span>
        <span className="ml-[18px] w-[41px]">Вставка</span>
        <span className="ml-[19px] w-[43px]">Графики</span>
        <span className="ml-[18px] w-[37px]">Сервис</span>
        <span className="ml-[18px] w-[26px]">Окно</span>
        <span className="ml-[18px] w-[43px]">Справка</span>
      </div>

      <Toolbar />

      {/* mdi area */}
      <div className="h-[616px] bg-[#9d9d9d] pt-px pl-[3px] grid grid-cols-[452px_452px_452px] grid-rows-[306px_306px] gap-x-[2px] gap-y-px">
        {charts.map((c) => (
          <ChartWindow key={c.symbol} c={c} />
        ))}
      </div>

      {/* tabs */}
      <div className="h-[20px] flex items-stretch bg-[#f0f0f0] border-t border-black text-[10.5px] tracking-[-0.3px] text-[#6e6e6e] border-b border-b-[#fbfbfb]">
        <div className="w-[2px] border-r border-[#a0a0a0] mb-[4px]" />
        {tabs.map((t) =>
          t.active ? (
            <div key={t.name} className={`${t.w} -mt-px pt-px flex items-center justify-center bg-white text-black border-t border-l border-black border-r border-r-[#666] border-b-2 border-b-[#777]`}>{t.name}</div>
          ) : (
            <div key={t.name} className={`${t.w} pt-px flex items-center justify-center`}>
              <span className="flex-1 text-center">{t.name}</span>
              <div className="w-px h-[13px] bg-[#888]" />
            </div>
          )
        )}
        <div className="ml-auto flex items-center gap-[13px] pr-[7px]">
          <svg width="4" height="7" viewBox="0 0 4 7"><path d="M4 0v7L0 3.500z" fill="#9a9a9a" /></svg>
          <svg width="4" height="7" viewBox="0 0 4 7"><path d="M0 0v7l4-3.500z" fill="#9a9a9a" /></svg>
        </div>
      </div>

      {/* status bar */}
      <div className="h-[21px] pt-[5px] flex items-center bg-[#f0f0f0] text-[11px] text-[#111]">
        <span className="ml-[2px] w-[638px] text-[11.5px]">Для справки, нажмите F1</span>
        <div className="w-px h-[16px] bg-[#a8a8a8]" />
        <span className="ml-[6px] w-[211px]">Default</span>
        <div className="w-px h-[16px] bg-[#a8a8a8]" />
        <div className="ml-[70px] w-px h-[16px] bg-[#a8a8a8]" />
        <div className="ml-[70px] w-px h-[16px] bg-[#a8a8a8]" />
        <div className="ml-[67px] w-px h-[16px] bg-[#a8a8a8]" />
        <div className="ml-[69px] w-px h-[16px] bg-[#a8a8a8]" />
        <div className="ml-[65px] w-px h-[16px] bg-[#a8a8a8]" />
        <svg width="24" height="13" viewBox="0 0 24 13" className="ml-[5px]" shapeRendering="crispEdges">
          {Array.from({ length: 12 }).map((_, i) => (
            <g key={i}>
              <rect x={i * 2} y="0" width="1" height={9 - i * 0.55} fill="#6b8e00" />
              <rect x={i * 2} y={10 - i * 0.55} width="1" height={3 + i * 0.55} fill="#a01505" />
            </g>
          ))}
        </svg>
        <span className="ml-[42px] tracking-[0.2px]">6710/1 kb</span>
      </div>

      {/* taskbar */}
      <div className="flex-1 flex items-end border-t border-[#5e6a76] bg-gradient-to-r from-[#b3d0ea] via-[#aecbe6] to-[#8298b0] to-90%">
        <div className="ml-[13px] w-[30px] h-[7px] rounded-t-full border border-[#6d8196] bg-[#c9dff0]" />
        <div className="ml-[17px] w-[58px] h-[7px] rounded-t-[3px] border border-[#7b8e9f] bg-[#dfe9f3] flex justify-center"><div className="w-[32px] h-[6px] bg-black" /></div>
        <div className="ml-[4px] w-[58px] h-[7px] rounded-t-[3px] border border-[#7b8e9f] bg-[#dfe9f3] flex justify-center"><div className="w-[32px] h-[6px] bg-[#2d55c4]" /></div>
        <div className="ml-[3px] w-[60px] h-[7px] rounded-t-[3px] border border-[#7b8e9f] bg-[#dfe9f3] flex justify-center"><div className="w-[22px] h-[5px] mt-px bg-[#e8e8e8] border-t border-[#d04030]" /></div>
        <div className="ml-[3px] w-[58px] h-[7px] rounded-t-[3px] border border-[#7b8e9f] bg-[#dfe9f3] flex justify-center"><div className="w-[20px] h-[5px] mt-px border-t border-dashed border-[#d04030]" /></div>
        <div className="ml-auto w-[14px] h-[7px] border-l border-[#6d8196] bg-[#a9bdd1]" />
      </div>
    </div>
  );
}
